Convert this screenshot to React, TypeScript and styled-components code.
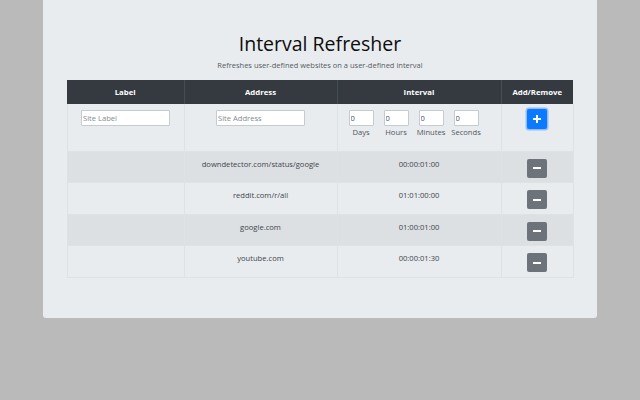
import React from "react";
import styled, { createGlobalStyle } from "styled-components";

const Global = createGlobalStyle`
  html, body { margin: 0; padding: 0; }
  body {
    background: #bababa;
    font-family: "Open Sans", "Noto Sans", sans-serif;
    color: #212529;
  }
`;

const Page = styled.div`
  width: 640px;
  height: 400px;
  display: flex;
  justify-content: center;
  align-items: flex-start;
`;

const Panel = styled.div`
  width: 554px;
  height: 318px;
  box-sizing: border-box;
  background: #e9ecef;
  border-radius: 0 0 3px 3px;
  padding: 31px 24px 0;
  display: flex;
  flex-direction: column;
  align-items: center;
`;

const Title = styled.h1`
  margin: 0;
  font-size: 19.5px;
  line-height: 26px;
  font-weight: 400;
  color: #0d0d0d;
`;

const Subtitle = styled.p`
  margin: 3px 0 0;
  font-size: 7.5px;
  line-height: 11px;
  color: #555b61;
`;

const Table = styled.table`
  margin-top: 9px;
  width: 506px;
  border-collapse: collapse;
  table-layout: fixed;
  font-size: 7.6px;
`;

const Th = styled.th<{ $w: number }>`
  width: ${(p) => p.$w}px;
  height: 24px;
  box-sizing: border-box;
  padding: 0 6px;
  background: #343a40;
  color: #fff;
  font-weight: 700;
  font-size: 7.8px;
  text-align: center;
  border-left: 1px solid #454d55;
  &:first-child { border-left: none; }
`;

const Row = styled.tr<{ $striped?: boolean }>`
  background: ${(p) => (p.$striped ? "#dde0e3" : "transparent")};
`;

const Td = styled.td<{ $h: number }>`
  height: ${(p) => p.$h}px;
  box-sizing: border-box;
  padding: 6px 6px 0;
  vertical-align: top;
  text-align: center;
  border: 1px solid #dfe2e5;
  border-top: none;
  color: #40454a;
  line-height: 12px;
`;

const TextInput = styled.input`
  width: 89px;
  height: 16px;
  box-sizing: border-box;
  border: 1px solid #c6cbd0;
  border-radius: 1px;
  background: #fff;
  padding: 0 1px;
  font-family: inherit;
  font-size: 7.6px;
  color: #495057;
  outline: none;
  &::placeholder { color: #858b91; }
`;

const IntervalGroup = styled.div`
  display: flex;
  gap: 10px;
  margin-left: 5px;
`;

const Unit = styled.label`
  width: 25px;
  display: flex;
  flex-direction: column;
  align-items: center;
  color: #50565c;
  font-size: 7.6px;
  line-height: 12px;
  white-space: nowrap;
`;

const NumInput = styled.input`
  width: 25px;
  height: 16px;
  box-sizing: border-box;
  border: 1px solid #c6cbd0;
  border-radius: 1px;
  background: #fff;
  padding: 0 1px;
  font-family: inherit;
  font-size: 7.6px;
  color: #495057;
  outline: none;
`;

const IconButton = styled.button<{ $variant: "add" | "remove" }>`
  width: 20px;
  height: ${(p) => (p.$variant === "add" ? 20 : 19)}px;
  margin: ${(p) => (p.$variant === "add" ? "-1px" : "1px")} auto 0;
  padding: 0;
  border: none;
  border-radius: 2px;
  display: flex;
  align-items: center;
  justify-content: center;
  background: ${(p) => (p.$variant === "add" ? "#0a7bff" : "#6c737b")};
  box-shadow: ${(p) =>
    p.$variant === "add" ? "0 0 0 1.5px rgba(80,150,255,0.55)" : "none"};
  color: #fff;
  cursor: pointer;
`;

const Glyph = styled.svg`
  display: block;
`;

const PlusIcon = () => (
  <Glyph width="8" height="8" viewBox="0 0 8 8">
    <rect x="3" y="0" width="2" height="8" fill="#fff" />
    <rect x="0" y="3" width="8" height="2" fill="#fff" />
  </Glyph>
);

const MinusIcon = () => (
  <Glyph width="8" height="2" viewBox="0 0 8 2">
    <rect x="0" y="0" width="8" height="2" fill="#fff" />
  </Glyph>
);

const sites = [
  { label: "", address: "downdetector.com/status/google", interval: "00:00:01:00" },
  { label: "", address: "reddit.com/r/all", interval: "01:01:00:00" },
  { label: "", address: "google.com", interval: "01:00:01:00" },
  { label: "", address: "youtube.com", interval: "00:00:01:30" },
];

const units = ["Days", "Hours", "Minutes", "Seconds"];

export default function App() {
  return (
    <>
      <Global />
      <Page>
        <Panel>
          <Title>Interval Refresher</Title>
          <Subtitle>Refreshes user-defined websites on a user-defined interval</Subtitle>
          <Table>
            <thead>
              <tr>
                <Th $w={117}>Label</Th>
                <Th $w={153}>Address</Th>
                <Th $w={164}>Interval</Th>
                <Th $w={72}>Add/Remove</Th>
              </tr>
            </thead>
            <tbody>
              <Row>
                <Td $h={47}>
                  <TextInput placeholder="Site Label" />
                </Td>
                <Td $h={47}>
                  <TextInput placeholder="Site Address" />
                </Td>
                <Td $h={47}>
                  <IntervalGroup>
                    {units.map((u) => (
                      <Unit key={u}>
                        <NumInput defaultValue="0" />
                        {u}
                      </Unit>
                    ))}
                  </IntervalGroup>
                </Td>
                <Td $h={47}>
                  <IconButton $variant="add" aria-label="Add">
                    <PlusIcon />
                  </IconButton>
                </Td>
              </Row>
              {sites.map((s, i) => (
                <Row key={s.address} $striped={i % 2 === 0}>
                  <Td $h={31.5}>{s.label}</Td>
                  <Td $h={31.5}>{s.address}</Td>
                  <Td $h={31.5}>{s.interval}</Td>
                  <Td $h={31.5}>
                    <IconButton $variant="remove" aria-label="Remove">
                      <MinusIcon />
                    </IconButton>
                  </Td>
                </Row>
              ))}
            </tbody>
          </Table>
        </Panel>
      </Page>
    </>
  );
}
